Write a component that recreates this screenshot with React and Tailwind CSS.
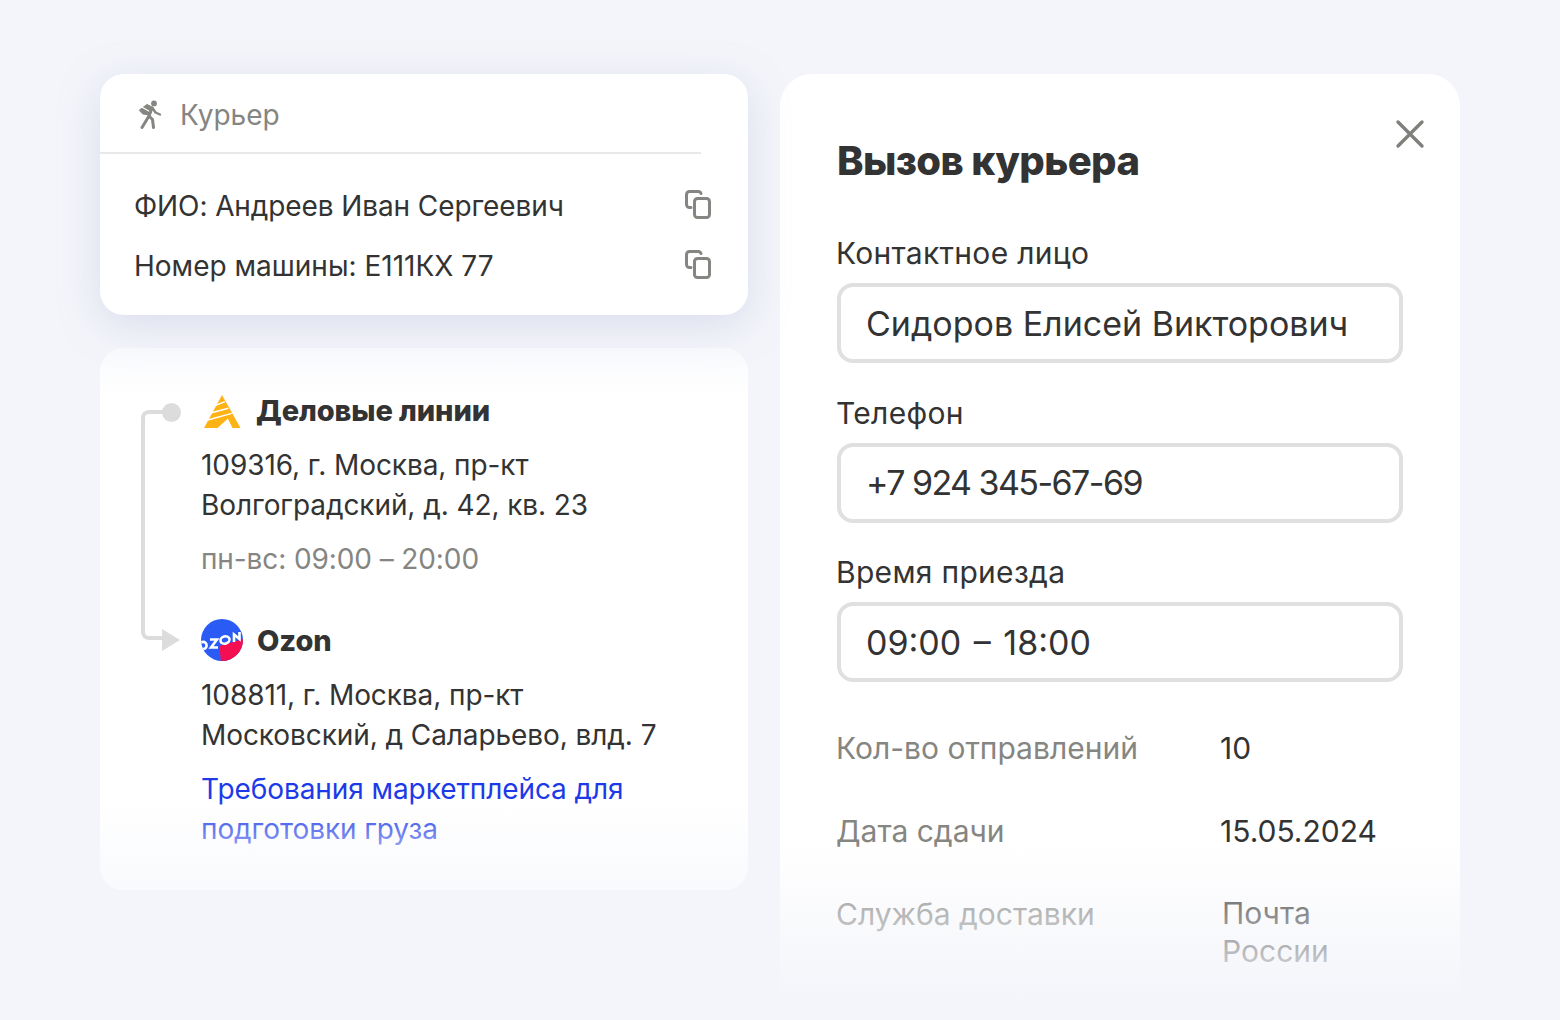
import React from 'react'

const CopyIcon = () => (
	<svg className="-mt-[2px]" width="28" height="32" viewBox="0 0 28 32" fill="none" stroke="#858581" strokeWidth="3" strokeLinecap="round" strokeLinejoin="round">
		<path d="M7 18.5 H5.5 A3 3 0 0 1 2.5 15.5 V5.5 A3 3 0 0 1 5.5 2.5 H14 A3 3 0 0 1 17 4.5" />
		<rect x="10.5" y="9.5" width="15" height="19" rx="3" />
	</svg>
)

const CourierIcon = () => (
	<svg width="24" height="30" viewBox="0 0 24 30" fill="none" stroke="#858581" strokeLinecap="round" strokeLinejoin="round">
		<circle cx="16" cy="3.4" r="2.9" fill="#858581" stroke="none" />
		<path d="M1.5 10 L9 4.5 L15 7.5 L12 15 L5 14 Z" fill="#858581" strokeWidth="1" />
		<path d="M4.5 7.5 L12.5 12" stroke="#ffffff" strokeWidth="1.2" />
		<path d="M14 8 L11 16 L4 27.5" strokeWidth="3" />
		<path d="M11 16 L14.5 19.5 L15.5 27.5" strokeWidth="3" />
		<path d="M14.5 8 L17.5 12.5 L22 14.5" strokeWidth="2.4" />
	</svg>
)

const DlLogo = () => (
	<svg width="37" height="33" viewBox="0 0 37 33">
		<path d="M18 0 L36.5 33 L0 33 Z" fill="#fdb315" />
		<path d="M6 12.5 L21 6.7 M3 19 L24.3 13.3 M0 26 L27.7 18.3" stroke="#ffffff" strokeWidth="1.4" />
		<path d="M13 33.5 L24 23.5 L29 33.5 Z" fill="#ffffff" />
		<path d="M24 23.5 L29 33.5 L31 33.5 L25 21.5 Z" fill="#fdb315" />
	</svg>
)

const OzonLogo = () => (
	<svg className="-mt-[2px]" width="42" height="42" viewBox="0 0 42 42">
		<defs>
			<clipPath id="ozon-clip">
				<circle cx="21" cy="21" r="21" />
			</clipPath>
		</defs>
		<g clipPath="url(#ozon-clip)">
			<rect width="42" height="42" fill="#2a5cf5" />
			<path d="M18.5 27 L42 20 L42 44 L20 44 Z" fill="#f50f52" />
			<g fill="none" stroke="#fff" strokeWidth="2.6">
				<ellipse cx="2" cy="26.5" rx="3.6" ry="3.6" />
				<path d="M9 20.5 H16 L10 28.5 H17" />
				<ellipse cx="24" cy="21" rx="4.6" ry="3.6" transform="rotate(-16 24 21)" />
				<path d="M33 23 V15.5 L38.5 20 V13" />
			</g>
		</g>
	</svg>
)

const Field = ({ label, value, valueClass }) => (
	<div className="mb-[29.5px]">
		<div className="-ml-[1px] text-[30px] leading-[40px] text-[#333333] tracking-[0.3px]">{label}</div>
		<div className="mt-[10px] h-[80px] rounded-[16px] border-[4px] border-[#e0e0e0] bg-white pl-[25px] flex items-center text-[34px] text-[#333333]">
			<span className={valueClass}>{value}</span>
		</div>
	</div>
)

const InfoRow = ({ label, children }) => (
	<div className="flex -ml-[1px] text-[30px] leading-[40px]">
		<div className="w-[384px] text-[#858581]">{label}</div>
		<div className="w-[190px] text-[#333333]">{children}</div>
	</div>
)

const App = () => {
	return (
		<div className="w-[1560px] h-[1020px] overflow-hidden bg-[#f4f5fa] flex items-start gap-[32px] pl-[100px] pt-[74px] font-['Inter','Noto_Sans',sans-serif]">
			{/* left column */}
			<div className="w-[648px]">
				<div className="h-[241px] rounded-[24px] bg-white shadow-[0_10px_40px_rgba(170,178,215,0.35)] relative z-10">
					<div className="h-[80px] mr-[47px] border-b-2 border-[#e8e8e8] pl-[38px] pt-[4px] flex items-center gap-[18px] text-[28px] text-[#858581]">
						<CourierIcon />
						<span>Курьер</span>
					</div>
					<div className="pt-[32px] pl-[34px] pr-[36px]">
						<div className="flex items-center justify-between h-[40px] text-[28px] text-[#333333] tracking-[-0.1px]">
							<span>ФИО: Андреев Иван Сергеевич</span>
							<CopyIcon />
						</div>
						<div className="flex items-center justify-between h-[40px] mt-[20px] text-[28px] text-[#333333]">
							<span>Номер машины: Е111КХ 77</span>
							<CopyIcon />
						</div>
					</div>
				</div>

				<div className="relative mt-[33px] h-[542px] rounded-[24px] bg-white overflow-hidden pt-[43px] pl-[101px] text-[28px] leading-[40px] text-[#333333] tracking-[-0.08px]">
					{/* route line */}
					<div className="absolute left-[41px] top-[62px] w-[24px] h-[230px] border-l-4 border-t-4 border-b-4 border-[#dcdcdc] rounded-l-[8px]" />
					<div className="absolute left-[62px] top-[55px] w-[19px] h-[19px] rounded-full bg-[#dcdcdc]" />
					<svg className="absolute left-[62px] top-[281px]" width="18" height="22" viewBox="0 0 18 22">
						<path d="M0 0 L18 11 L0 22 Z" fill="#dcdcdc" />
					</svg>

					<div className="flex items-center gap-[15px] h-[40px] ml-[3px]">
						<DlLogo />
						<span className="text-[29px] font-extrabold text-[#333333] tracking-[-0.1px]">Деловые линии</span>
					</div>
					<div className="mt-[14px]">109316, г. Москва, пр-кт<br />Волгоградский, д. 42, кв. 23</div>
					<div className="mt-[14px] text-[#858581] tracking-[-0.1px]">пн-вс: 09:00 – 20:00</div>

					<div className="flex items-center gap-[14px] h-[40px] mt-[42px]">
						<OzonLogo />
						<span className="text-[29px] font-extrabold text-[#333333] tracking-[-0.1px]">Ozon</span>
					</div>
					<div className="mt-[14px]">108811, г. Москва, пр-кт<br />Московский, д Саларьево, влд. 7</div>
					<div className="mt-[14px] text-[#1c3ae8]">Требования маркетплейса для<br />подготовки груза</div>

					<div className="absolute inset-x-0 bottom-0 h-[90px] bg-gradient-to-b from-[#fbfbfd00] to-[#f9fafd]" />
					<div className="absolute inset-x-0 top-0 h-[50px] bg-gradient-to-b from-[#f9fafd] to-[#ffffff00]" />
				</div>
			</div>

			{/* right panel */}
			<div className="relative w-[680px] h-[946px] rounded-t-[32px] bg-white overflow-hidden pt-[60px] pl-[57px]">
				<svg className="absolute right-[35px] top-[45px]" width="30" height="30" viewBox="0 0 30 30" fill="none" stroke="#7f7f7b" strokeWidth="3.4" strokeLinecap="round">
					<path d="M3 3 L27 27 M27 3 L3 27" />
				</svg>
				<h1 className="text-[40px] leading-[54px] font-extrabold text-[#333333] tracking-[-0.6px]">Вызов курьера</h1>
				<div className="w-[566px] mt-[45px]">
					<Field label="Контактное лицо" value="Сидоров Елисей Викторович" />
					<Field label="Телефон" value="+7 924 345-67-69" valueClass="tracking-[-1.55px]" />
					<Field label="Время приезда" value="09:00 – 18:00" valueClass="[word-spacing:3px]" />
				</div>
				<div className="mt-[46px] flex flex-col gap-[43px]">
					<InfoRow label="Кол-во отправлений">10</InfoRow>
					<InfoRow label="Дата сдачи">15.05.2024</InfoRow>
					<InfoRow label="Служба доставки">
						<div className="pl-[2px] leading-[38px]">Почта<br />России</div>
					</InfoRow>
				</div>
				<div className="absolute inset-x-0 bottom-0 h-[178px] bg-gradient-to-b from-[#f4f5fa00] to-[#f4f5fa] to-[89%]" />
			</div>
		</div>
	)
}

export default App
